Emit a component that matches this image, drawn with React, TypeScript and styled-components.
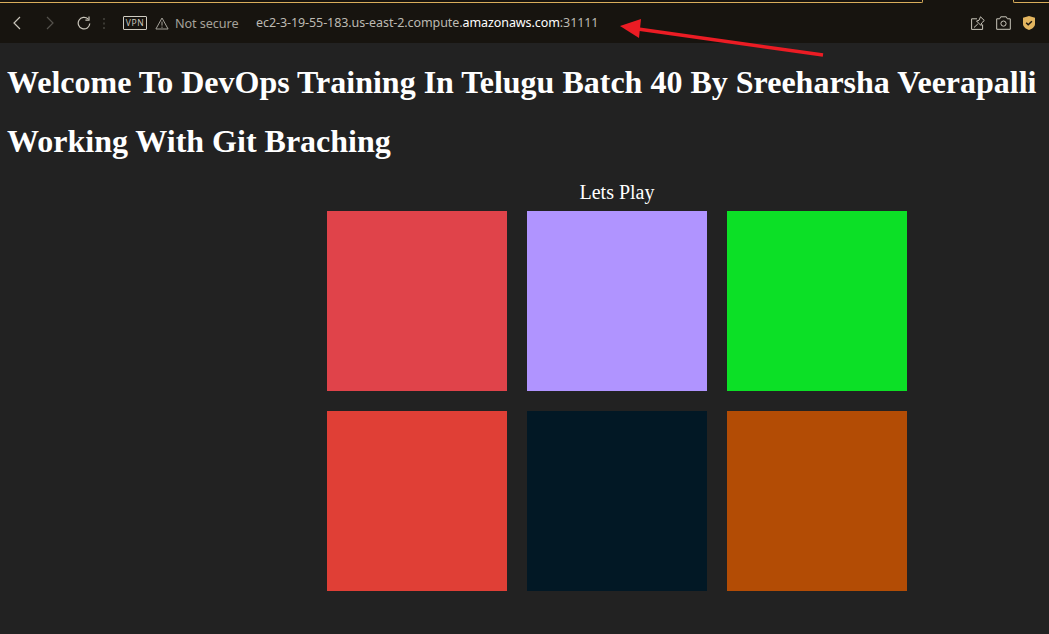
import React from "react";
import styled, {createGlobalStyle} from "styled-components";

const GlobalStyle = createGlobalStyle`
  html, body {
    margin: 0;
    padding: 0;
    background: #222222;
  }
  body {
    color: #ffffff;
    font-family: "Liberation Serif", "Times New Roman", serif;
    overflow: hidden;
  }
`

const Screen = styled.div`
  position: relative;
  width: 1049px;
  height: 634px;
  overflow: hidden;
`

const Chrome = styled.header`
  height: 43px;
  background: #17140f;
  display: flex;
  flex-direction: column;
`

const TabEdge = styled.div`
  height: 3px;
  display: flex;
  justify-content: space-between;
`

const TabLine = styled.span<{$width: number; $corner: "left" | "right"}>`
  width: ${p => p.$width}px;
  height: 3px;
  box-sizing: border-box;
  border-bottom: 1px solid #d9ad5b;
  ${p => p.$corner === "right"
    ? "border-right: 1px solid #d9ad5b; border-bottom-right-radius: 2px;"
    : "border-left: 1px solid #d9ad5b; border-bottom-left-radius: 2px;"}
`

const Toolbar = styled.div`
  flex: 1;
  display: flex;
  align-items: center;
  padding: 0 14px 0 13px;
`

const NavIcon = styled.svg<{$gap: number}>`
  display: block;
  flex: none;
  margin-right: ${p => p.$gap}px;
`

const VpnBadge = styled.span`
  flex: none;
  box-sizing: border-box;
  width: 24px;
  height: 14px;
  margin-right: 8px;
  border: 1px solid #d0ccc1;
  border-radius: 1px;
  color: #d0ccc1;
  font: 8.5px/12px "Open Sans", sans-serif;
  letter-spacing: 0.6px;
  text-align: center;
`

const Secure = styled.span`
  flex: none;
  width: 81px;
  color: #a5a29a;
  font: 12.7px/16px "Noto Sans", sans-serif;
  letter-spacing: -0.1px;
`

const Url = styled.span`
  flex: 1;
  color: #bdbab2;
  font: 12.5px/16px "Noto Sans", sans-serif;
  letter-spacing: -0.08px;
  white-space: nowrap;
  strong {
    color: #ffffff;
    font-weight: 400;
  }
`

const Page = styled.main`
  padding: 0 7px;
`

const Heading = styled.h1`
  margin: 21.44px 0;
  font-size: 32px;
  line-height: 37px;
  font-weight: 700;
  white-space: nowrap;
`

const Board = styled.section`
  width: 580px;
  margin: -21.44px 0 0 320px;
  padding-top: 21px;
`

const Title = styled.div`
  height: 30px;
  font-size: 20px;
  line-height: 23px;
  text-align: center;
`

const Grid = styled.div`
  display: grid;
  grid-template-columns: repeat(3, 180px);
  grid-auto-rows: 180px;
  gap: 20px;
`

const Tile = styled.div<{$color: string}>`
  background: ${p => p.$color};
`

const ArrowMark = styled.svg`
  position: absolute;
  left: 0;
  top: 0;
  pointer-events: none;
`

const tiles = ["#e0434a", "#b094ff", "#0ce026", "#e03f36", "#021825", "#b34c05"]

const App = () => (
  <Screen>
    <GlobalStyle />
    <Chrome>
      <TabEdge>
        <TabLine $width={923} $corner="right" />
        <TabLine $width={36} $corner="left" />
      </TabEdge>
      <Toolbar>
        <NavIcon $gap={25} width="8" height="14" viewBox="0 0 8 14" fill="none" stroke="#c9c5ba" strokeWidth="1.2">
          <path d="M7 1 1 7l6 6" />
        </NavIcon>
        <NavIcon $gap={23} width="8" height="14" viewBox="0 0 8 14" fill="none" stroke="#55524c" strokeWidth="1.2">
          <path d="M1 1l6 6-6 6" />
        </NavIcon>
        <NavIcon $gap={12} width="14" height="14" viewBox="0 0 14 14" fill="none" stroke="#c9c5ba" strokeWidth="1.2">
          <path d="M12.800 7.500A5.800 5.800 0 1 1 11 2.900" />
          <path d="M12 .6v3.600H8.400" />
        </NavIcon>
        <NavIcon $gap={18} width="2" height="11" viewBox="0 0 2 11" fill="#3a3832">
          <rect y="0" width="2" height="2" />
          <rect y="4.5" width="2" height="2" />
          <rect y="9" width="2" height="2" />
        </NavIcon>
        <VpnBadge>VPN</VpnBadge>
        <NavIcon $gap={6} width="14" height="13" viewBox="0 0 14 13" fill="none" stroke="#a5a29a" strokeWidth="1">
          <path d="M7 1 .9 12h12.2z" />
          <path d="M7 4.6v4M7 9.6v1.2" />
        </NavIcon>
        <Secure>Not secure</Secure>
        <Url>ec2-3-19-55-183.us-east-2.compute.<strong>amazonaws.com</strong>:31111</Url>
        <NavIcon $gap={11} width="14" height="14" viewBox="0 0 14 14" fill="none" stroke="#c9c5ba" strokeWidth="1">
          <path d="M6 2.800H.6v10.600h11V8.500" />
          <path d="M9.500.8 13.300 4.500 10.600 7 10 9.500 5.500 5 8 4.300z" />
          <path d="M6.800 8 3 11.500" />
        </NavIcon>
        <NavIcon $gap={12} width="15" height="14" viewBox="0 0 15 14" fill="none" stroke="#c9c5ba" strokeWidth="1">
          <path d="M.7 2.800h3l1-2h5.600l1 2h3v10.500H.7z" />
          <circle cx="7.5" cy="7.6" r="2.6" />
        </NavIcon>
        <NavIcon $gap={0} width="12" height="14" viewBox="0 0 12 14">
          <path d="M6 0l6 1.800v6C12 11 9 13 6 14 3 13 0 11 0 7.800V1.800z" fill="#e3b55f" />
          <path d="M3.200 6.800 5.200 8.800 8.900 5.200" fill="none" stroke="#17140f" strokeWidth="1.500" />
        </NavIcon>
      </Toolbar>
    </Chrome>
    <Page>
      <Heading>Welcome To DevOps Training In Telugu Batch 40 By Sreeharsha Veerapalli</Heading>
      <Heading>Working With Git Braching</Heading>
      <Board>
        <Title>Lets Play</Title>
        <Grid>
          {tiles.map(color => <Tile key={color} $color={color} />)}
        </Grid>
      </Board>
    </Page>
    <ArrowMark width="1049" height="634" viewBox="0 0 1049 634">
      <path d="M823 55 638 29" fill="none" stroke="#ec1c24" strokeWidth="3.500" />
      <path d="M620 26 641 19 639 38z" fill="#ec1c24" />
    </ArrowMark>
  </Screen>
)

export default App;
